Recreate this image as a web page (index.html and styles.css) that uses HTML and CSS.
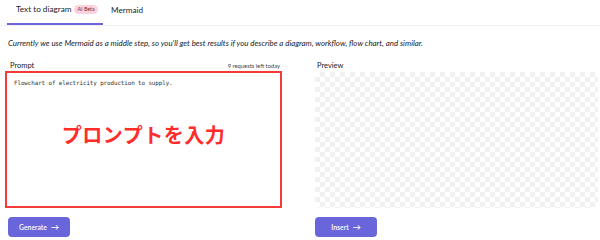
FILE: index.html
```html
<!DOCTYPE html>
<html lang="en">
<head>
<meta charset="utf-8">
<link rel="stylesheet" href="styles.css">
</head>
<body>
<div class="tabs">
  <div class="tab active">Text to diagram <span class="badge">AI Beta</span></div>
  <div class="tab">Mermaid</div>
</div>
<p class="note">Currently we use Mermaid as a middle step, so you'll get best results if you describe a diagram, workflow, flow chart, and similar.</p>
<div class="cols">
  <div class="col">
    <div class="label-row"><span class="label">Prompt</span><span class="meta">9 requests left today</span></div>
    <div class="prompt">
      <div class="prompt-text">Flowchart of electricity production to supply.</div>
      <div class="jp">プロンプトを入力</div>
    </div>
    <div class="actions"><button class="btn">Generate <span class="arrow">→</span></button></div>
  </div>
  <div class="col">
    <div class="label-row"><span class="label">Preview</span></div>
    <div class="preview"></div>
    <div class="actions"><button class="btn">Insert <span class="arrow">→</span></button></div>
  </div>
</div>
</body>
</html>
```
FILE: styles.css
```css
* { box-sizing: border-box; }
html, body { margin: 0; padding: 0; background: #fff; }
body { font-family: Lato, "Open Sans", sans-serif; color: #1b1b1f; width: 600px; height: 240px; overflow: hidden; }
.tabs { display: flex; align-items: flex-end; height: 26px; border-bottom: 1px solid #f0f0f3; padding-left: 7px; }
.tab { font-size: 8.2px; padding: 2px 9px 7px; height: 25px; display: flex; align-items: center; gap: 3px; color: #1b1b1f; white-space: nowrap; flex: none; }
.tab.active { border-bottom: 2px solid #6965db; width: 96px; }
.tab + .tab { padding-left: 8px; }
.badge { background: #fbd3de; color: #7a2a3c; font-size: 5.3px; padding: 1px 3px; border-radius: 5px; line-height: 7px; }
.note { margin: 12px 0 0 8px; font-style: italic; font-size: 7.9px; color: #1b1b1f; line-height: 11px; }
.cols { display: flex; gap: 33px; padding: 12px 2px 0 5px; }
.col { display: flex; flex-direction: column; }
.col:first-child { width: 277px; }
.col:last-child { width: 283px; }
.label-row { display: flex; justify-content: space-between; align-items: baseline; padding: 0 2px 0 5px; height: 10px; }
.col:last-child .label-row { padding-left: 2px; }
.label { font-size: 7.5px; color: #1b1b1f; }
.meta { font-size: 5.8px; color: #444; }
.prompt { margin-top: 0; height: 137px; border: 2px solid #f53a3a; padding: 7px 7px; position: relative; }
.prompt-text { font-family: "DejaVu Sans Mono", monospace; font-size: 5.9px; color: #333; letter-spacing: -0.1px; }
.jp { font-family: "Noto Sans CJK JP", sans-serif; font-weight: 700; color: #ff2c2c; font-size: 20px; text-align: center; margin-top: 34px; letter-spacing: 0.5px; }
.preview { height: 136px; margin-top: 1px; border-radius: 5px; background-color: #fff;
  background-image: linear-gradient(45deg, #f1f1f2 25%, transparent 25%, transparent 75%, #f1f1f2 75%), linear-gradient(45deg, #f1f1f2 25%, transparent 25%, transparent 75%, #f1f1f2 75%);
  background-size: 10px 10px; background-position: 0 0, 5px 5px; }
.actions { padding: 9px 0 0 3px; }
.col:last-child .actions { padding-left: 0; }
.btn { font-family: Lato, sans-serif; background: #6965db; color: #fff; border: 0; border-radius: 4px; width: 62px; height: 20px; font-size: 6.8px; font-weight: 600; display: flex; align-items: center; justify-content: center; gap: 4px; padding: 0; }
.arrow { font-size: 8px; }
```
